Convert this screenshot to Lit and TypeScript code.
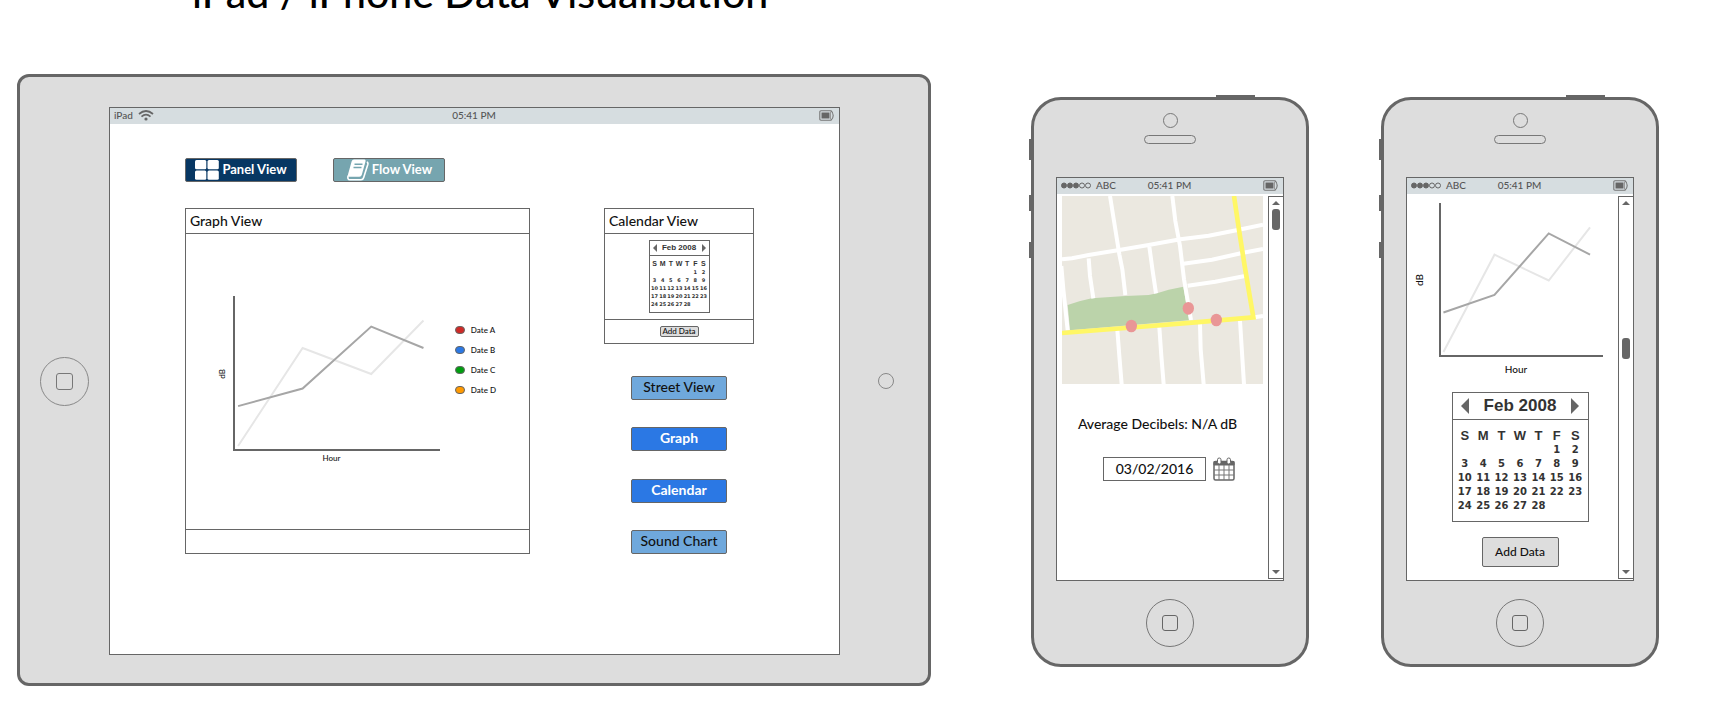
import { LitElement, html, svg, css } from "lit";
import { customElement, property } from "lit/decorators.js";
import { classMap } from "lit/directives/class-map.js";
import { styleMap } from "lit/directives/style-map.js";

const base = css`
  * {
    box-sizing: border-box;
  }
  button,
  input {
    font: inherit;
    color: inherit;
    margin: 0;
    padding: 0;
  }
  svg {
    display: block;
  }
`;

/** Two-series line chart with axis captions. */
@customElement("line-chart")
export class LineChart extends LitElement {
  @property({ type: Boolean, reflect: true }) small = false;

  static styles = [
    base,
    css`
      :host {
        display: grid;
        grid-template-columns: auto minmax(0, 1fr);
        align-content: start;
        column-gap: 14px;
        row-gap: 6px;
        font-size: 10px;
        font-weight: 500;
        line-height: 12px;
        color: #111;
      }
      :host([small]) {
        column-gap: 6px;
        row-gap: 2px;
        font-size: 8px;
        line-height: 10px;
      }
      .vertical {
        writing-mode: vertical-rl;
        transform: rotate(180deg);
        justify-self: center;
        align-self: center;
      }
      .plot {
        width: 100%;
        height: 154px;
        border-left: 2px solid #666;
        border-bottom: 2px solid #666;
      }
      :host([small]) .plot {
        height: 155px;
      }
      .plot path {
        fill: none;
        stroke-width: 2;
        vector-effect: non-scaling-stroke;
      }
      .pale {
        stroke: #e6e6e6;
      }
      .dark {
        stroke: #a6a6a6;
      }
      .horizontal {
        grid-column: 2;
        text-align: center;
        padding-right: 10px;
      }
    `,
  ];

  render() {
    return html`
      <span class="vertical">dB</span>
      <svg class="plot" viewBox="0 0 100 100" preserveAspectRatio="none" aria-hidden="true">
        <path class="pale" d="M1.500 98L33 34L66.500 51L92 16" />
        <path class="dark" d="M1.500 72L33 60.500L66.500 20L92 34" />
      </svg>
      <span class="horizontal">Hour</span>
    `;
  }
}

/** Month grid. */
@customElement("month-calendar")
export class MonthCalendar extends LitElement {
  @property({ type: Boolean, reflect: true }) small = false;

  static styles = [
    base,
    css`
      :host {
        display: block;
        width: 137px;
        border: 1px solid #666;
        color: #333;
        background: #fff;
      }
      .head {
        display: flex;
        align-items: center;
        justify-content: space-between;
        height: 27px;
        padding: 0 8px;
        border-bottom: 1px solid #666;
        font: bold 17px/26px "Liberation Sans", Arial, sans-serif;
      }
      .step {
        border: 0;
        background: none;
        color: #666;
      }
      .step svg {
        width: 8px;
        height: 16px;
      }
      .body {
        padding: 9px 3px 8px;
      }
      table {
        width: 100%;
        table-layout: fixed;
        border-collapse: collapse;
        font: bold 10px/14px "DejaVu Sans", Verdana, sans-serif;
      }
      th,
      td {
        padding: 0;
        height: 14px;
        text-align: center;
        white-space: nowrap;
      }
      th {
        font: bold 13px/14px "Liberation Sans", Arial, sans-serif;
      }
      :host([small]) {
        width: 61px;
      }
      :host([small]) .head {
        height: 15px;
        padding: 0 3px;
        font-size: 8px;
        line-height: 14px;
      }
      :host([small]) .step svg {
        width: 4px;
        height: 8px;
      }
      :host([small]) .body {
        padding: 4px 1px;
      }
      :host([small]) table {
        font-size: 5px;
        line-height: 8px;
      }
      :host([small]) th,
      :host([small]) td {
        height: 8px;
      }
      :host([small]) th {
        font-size: 7px;
        line-height: 8px;
      }
    `,
  ];

  render() {
    const days = ["S", "M", "T", "W", "T", "F", "S"];
    const offset = 5;
    const weeks = Array.from({ length: 5 }, (_, w) =>
      days.map((_d, i) => {
        const n = w * 7 + i - offset + 1;
        return n > 0 && n < 29 ? n : "";
      })
    );
    return html`
      <div class="head">
        <button class="step" aria-label="Previous month">
          <svg viewBox="0 0 8 16"><path fill="currentColor" d="M8 0V16L0 8Z" /></svg>
        </button>
        <span>Feb 2008</span>
        <button class="step" aria-label="Next month">
          <svg viewBox="0 0 8 16"><path fill="currentColor" d="M0 0V16L8 8Z" /></svg>
        </button>
      </div>
      <div class="body">
        <table>
          <thead>
            <tr>${days.map((d) => html`<th scope="col">${d}</th>`)}</tr>
          </thead>
          <tbody>
            ${weeks.map((w) => html`<tr>${w.map((n) => html`<td>${n}</td>`)}</tr>`)}
          </tbody>
        </table>
      </div>
    `;
  }
}

/** Carrier, clock and battery strip. */
@customElement("status-bar")
export class StatusBar extends LitElement {
  @property() device: "tablet" | "phone" = "phone";

  static styles = [
    base,
    css`
      :host {
        display: grid;
        grid-template-columns: 1fr auto 1fr;
        align-items: center;
        height: 16px;
        padding: 0 5px 2px 4px;
        background: #d6dde0;
        color: #555;
        font-size: 10px;
        font-weight: 500;
        line-height: 14px;
      }
      .carrier {
        display: flex;
        align-items: center;
        gap: 5px;
      }
      .battery {
        justify-self: end;
      }
    `,
  ];

  render() {
    const carrier =
      this.device === "tablet"
        ? html`<span>iPad</span>
            <svg width="16" height="11" viewBox="0 0 16 11" fill="none" stroke="#666" stroke-width="1.7">
              <path d="M1 4 Q8 -2 15 4" />
              <path d="M3.5 6.7 Q8 2.700 12.500 6.700" />
              <circle cx="8" cy="9" r="1.600" fill="#666" stroke="none" />
            </svg>`
        : html`<svg width="30" height="7" viewBox="0 0 30 7" stroke="#666" stroke-width="1">
              ${[0, 1, 2, 3, 4].map(
                (i) => svg`<circle cx=${3 + i * 6} cy="3.5" r="2.5" fill=${i < 3 ? "#666" : "none"} />`
              )}
            </svg>
            <span>ABC</span>`;
    return html`
      <span class="carrier">${carrier}</span>
      <span>05:41 PM</span>
      <svg class="battery" width="15" height="11" viewBox="0 0 15 11">
        <path
          d="M2 .8H12Q14.200 2.500 14.200 5.500Q14.200 8.500 12 10.200H2Q.8 10.200 .8 9V2Q.8 .8 2 .8Z"
          fill="none"
          stroke="#777"
          stroke-width="1.100"
        />
        <path d="M11.500 1.500V9.500" stroke="#999" stroke-width="1" />
        <rect x="2.500" y="2.500" width="8" height="6" fill="#666" />
      </svg>
    `;
  }
}

/** Handset frame; its content is slotted beside the scroll track. */
@customElement("phone-frame")
export class PhoneFrame extends LitElement {
  @property({ type: Number }) scroll = 0;

  static styles = [
    base,
    css`
      :host {
        display: block;
        position: relative;
        padding: 13px 22px 17px;
        border: 3px solid #666;
        border-radius: 30px;
        background: #ddd;
      }
      .key {
        position: absolute;
        right: 100%;
        width: 5px;
        height: 16px;
        background: #666;
      }
      .mute {
        top: 39px;
        height: 21px;
      }
      .up {
        top: 95px;
      }
      .down {
        top: 142px;
      }
      .power {
        right: 51px;
        bottom: 100%;
        width: 39px;
        height: 5px;
      }
      .top {
        display: flex;
        flex-direction: column;
        align-items: center;
        gap: 7px;
        padding-bottom: 33px;
      }
      .camera {
        width: 15px;
        height: 15px;
        border: 1px solid #777;
        border-radius: 50%;
      }
      .speaker {
        width: 52px;
        height: 9px;
        border: 1px solid #777;
        border-radius: 5px;
      }
      .screen {
        border: 1px solid #666;
        background: #fff;
      }
      .view {
        display: flex;
        min-height: 386px;
        padding-top: 2px;
      }
      .content {
        flex: 1;
        min-width: 0;
        padding: 0 5px;
      }
      .scrollbar {
        display: flex;
        flex-direction: column;
        align-items: center;
        width: 15px;
        margin-bottom: 1px;
        padding: 4px 0;
        border: solid #666;
        border-width: 1px 0 1px 1px;
      }
      .scrollbar svg {
        width: 8px;
        height: 4px;
      }
      .track {
        flex: 1;
        padding: 4px 0;
      }
      .thumb {
        width: 8px;
        height: 21px;
        border-radius: 3px;
        background: #666;
      }
      .home {
        display: grid;
        place-items: center;
        width: 48px;
        height: 48px;
        margin: 18px auto 0;
        padding: 0;
        border: 1px solid #777;
        border-radius: 50%;
        background: none;
      }
      .home span {
        width: 16px;
        height: 16px;
        border: 1px solid #666;
        border-radius: 3px;
      }
    `,
  ];

  render() {
    return html`
      <span class="key mute"></span><span class="key up"></span>
      <span class="key down"></span>
      <span class="key power"></span>
      <div class="top"><span class="camera"></span><span class="speaker"></span></div>
      <div class="screen">
        <status-bar></status-bar>
        <div class="view">
          <div class="content"><slot></slot></div>
          <div class="scrollbar">
            <svg viewBox="0 0 8 4"><path fill="#666" d="M4 0L8 4H0Z" /></svg>
            <div class="track">
              <div style=${styleMap({ height: `${this.scroll}%` })}></div>
              <div class="thumb"></div>
            </div>
            <svg viewBox="0 0 8 4"><path fill="#666" d="M0 0H8L4 4Z" /></svg>
          </div>
        </div>
      </div>
      <button class="home" aria-label="Home"><span></span></button>
    `;
  }
}

const streetMap = html`
  <svg class="map" viewBox="0 0 603 565" role="img" aria-label="Street map">
    <rect width="603" height="565" fill="#ebe8e0" />
    <path fill="#bbd3aa" d="M17 327L52 316L89 307L190 300L260 297L285 292L320 281L364 272L381 373L24 403Z" />
    <g fill="none" stroke="#fff" stroke-width="12">
      <path d="M0 190L30 187L80 177L172 162L260 147L355 130L440 119L527 102L603 86" />
      <path d="M144 0L156 75L172 175L181 220L190 297" />
      <path d="M331 0L340 75L354 150L366 250L387 372" />
      <path d="M80 187L84 240L94 307" />
      <path d="M262 152L272 225L282 292" />
      <path d="M364 203L450 191L540 171L603 159" />
      <path d="M377 269L460 257L549 240" />
      <path d="M-2 210L4 280L17 403" />
      <path d="M578 364L603 360" />
      <path d="M166 402L172 480L179 565M292 394L298 480L305 565" />
      <path d="M414 384L416 460L425 565M534 374L540 470L546 565" />
    </g>
    <path d="M0 411L190 396L400 379L574 364L548 210L530 95L516 0" fill="none" stroke="#fff766" stroke-width="14" />
    <g fill="#e99696">
      <ellipse cx="208" cy="390" rx="17" ry="19" />
      <ellipse cx="379" cy="337" rx="17" ry="19" />
      <ellipse cx="463" cy="372" rx="17" ry="19" />
    </g>
  </svg>
`;

const calendarIcon = html`
  <svg width="22" height="24" viewBox="0 0 22 24" fill="none" stroke="#666">
    <rect x="1" y="4.500" width="20" height="18.500" rx="1.500" stroke-width="1.500" fill="#fff" />
    <path d="M1 4.500H21V8H1Z" fill="#666" />
    <path d="M1 13H21M1 18H21M6 8V23M11 8V23M16 8V23" stroke="#777" />
    <rect x="4.500" y="1" width="3.500" height="6" rx="1.700" fill="#fff" />
    <rect x="14" y="1" width="3.500" height="6" rx="1.700" fill="#fff" />
  </svg>
`;

const panelIcon = html`
  <svg width="24" height="20" viewBox="0 0 24 20" fill="#fff">
    <rect x="0" y="0" width="11.300" height="9.300" rx="1.500" />
    <rect x="12.500" y="0" width="11.300" height="9.300" rx="1.500" />
    <rect x="0" y="10.500" width="11.300" height="9.300" rx="1.500" />
    <rect x="12.500" y="10.500" width="11.300" height="9.300" rx="1.500" />
  </svg>
`;

const bookIcon = html`
  <svg width="23" height="22" viewBox="0 0 23 22">
    <path
      d="M2.200 16.500Q1 20.800 4 20.800H15Q17 20.800 17.600 18.800L21.800 5.500Q22.300 3.500 20.800 3"
      fill="none"
      stroke="#fff"
      stroke-width="1.600"
    />
    <path d="M8 .5H18.500Q20 .5 19.500 2.500L15.800 15.800Q15.300 17.800 13.300 17.800H3.200Q1.500 17.800 2 15.500L5.600 2.500Q6.200 .5 8 .5Z" fill="#fff" />
    <path d="M8.500 5.200H16.500M7.500 8.500H15.500" stroke="#76a5af" stroke-width="1.400" />
  </svg>
`;

@customElement("app-root")
export class AppRoot extends LitElement {
  static styles = [
    base,
    css`
      :host {
        display: block;
        background: #fff;
        color: #111;
        font-family: Lato, "Open Sans", sans-serif;
        font-size: 14px;
        line-height: 20px;
      }
      header {
        display: flex;
        align-items: flex-end;
        height: 13px;
        padding-left: 192px;
        overflow: hidden;
      }
      h1 {
        margin: 0;
        font-size: 41px;
        font-weight: 500;
        line-height: 40px;
        color: #000;
        white-space: nowrap;
      }
      main {
        display: grid;
        grid-template-columns: minmax(0, 942fr) minmax(0, 278fr) minmax(0, 278fr);
        align-items: start;
        column-gap: 72px;
        padding: 61px 57px 17px 17px;
      }
      .stage {
        padding-right: 28px;
      }
      .tablet {
        display: grid;
        grid-template-columns: 89px minmax(0, 1fr) 88px;
        align-items: center;
        justify-items: center;
        padding: 30px 0 28px;
        border: 3px solid #666;
        border-radius: 12px;
        background: #ddd;
      }
      .home {
        display: grid;
        place-items: center;
        width: 49px;
        height: 49px;
        border: 1px solid #888;
        border-radius: 50%;
        background: none;
      }
      .home span {
        width: 17px;
        height: 17px;
        border: 1px solid #777;
        border-radius: 3px;
      }
      .lens {
        width: 16px;
        height: 16px;
        margin-left: 4px;
        border: 1px solid #888;
        border-radius: 50%;
      }
      .screen {
        justify-self: stretch;
        border: 1px solid #666;
        background: #fff;
      }
      .desk {
        padding: 34px 85px 100px 75px;
      }
      .modes {
        display: flex;
        gap: 36px;
        margin-bottom: 26px;
      }
      .btn {
        display: flex;
        align-items: center;
        justify-content: center;
        height: 24px;
        border: 1px solid #666;
        border-radius: 2px;
        padding-bottom: 2px;
        font-size: 14px;
        line-height: 20px;
        white-space: nowrap;
      }
      .mode {
        width: 112px;
        padding: 0;
        gap: 3px;
        color: #fff;
        font-size: 13px;
        font-weight: bold;
      }
      .mode span {
        padding-bottom: 2px;
      }
      .navy {
        background: #073763;
      }
      .teal {
        background: #76a5af;
      }
      .boards {
        display: grid;
        grid-template-columns: minmax(0, 345fr) minmax(0, 150fr);
        gap: 74px;
      }
      .panel {
        border: 1px solid #666;
      }
      h2 {
        margin: 0;
        height: 25px;
        padding: 0 4px;
        border-bottom: 1px solid #666;
        font-size: 14px;
        font-weight: 500;
        line-height: 24px;
      }
      .foot {
        display: grid;
        place-items: center;
        height: 24px;
        border-top: 1px solid #666;
      }
      .graph {
        display: flex;
        gap: 15px;
        height: 295px;
        padding: 62px 33px 0 31px;
      }
      .graph line-chart {
        flex: 1;
      }
      .legend {
        display: flex;
        flex-direction: column;
        gap: 10px;
        margin: 0;
        padding: 29px 0 0;
        list-style: none;
        font-size: 8px;
        font-weight: 500;
        line-height: 10px;
      }
      .legend li {
        display: flex;
        align-items: center;
        gap: 6px;
      }
      .swatch {
        width: 10px;
        height: 8px;
        border: 1px solid #666;
        border-radius: 4px;
      }
      .side {
        display: flex;
        flex-direction: column;
      }
      .month {
        display: grid;
        place-items: center;
        height: 85px;
      }
      .tiny {
        width: 39px;
        height: 11px;
        border: 1px solid #666;
        border-radius: 2px;
        background: #ddd;
        font-size: 8px;
        font-weight: 500;
        line-height: 9px;
        white-space: nowrap;
      }
      .links {
        display: flex;
        flex: 1;
        flex-direction: column;
        align-items: center;
        justify-content: space-between;
        padding-top: 32px;
      }
      .link {
        width: 96px;
        background: #6fa8dc;
        color: #111;
        font-weight: 500;
      }
      .link.active {
        background: #2b78e4;
        color: #fff;
        font-weight: bold;
      }
      phone-frame {
        margin-top: 23px;
      }
      .map {
        width: 100%;
      }
      .average {
        margin: 30px 0 23px;
        padding-right: 10px;
        font-weight: 500;
        text-align: center;
      }
      .when {
        display: flex;
        justify-content: flex-end;
        gap: 7px;
        padding-right: 28px;
      }
      .date {
        width: 103px;
        height: 24px;
        border: 1px solid #666;
        padding-bottom: 2px;
        background: #fff;
        font-weight: 500;
        text-align: center;
      }
      .icon {
        border: 0;
        background: none;
      }
      .trend {
        padding: 7px 10px 0 1px;
      }
      .picker {
        display: flex;
        flex-direction: column;
        align-items: center;
        gap: 15px;
        padding: 17px 0 0 15px;
      }
      .add {
        width: 77px;
        height: 30px;
        padding-bottom: 0;
        background: #ddd;
        font-size: 12px;
        font-weight: 500;
      }
    `,
  ];

  render() {
    const legend = [
      ["Date A", "#cf2a27"],
      ["Date B", "#2b78e4"],
      ["Date C", "#009e0f"],
      ["Date D", "#ff9900"],
    ];
    const links: [string, boolean][] = [
      ["Street View", false],
      ["Graph", true],
      ["Calendar", true],
      ["Sound Chart", false],
    ];
    return html`
      <header><h1>iPad / iPhone Data Visualisation</h1></header>
      <main>
        <div class="stage">
          <section class="tablet" aria-label="iPad">
            <button class="home" aria-label="Home"><span></span></button>
            <div class="screen">
              <status-bar device="tablet"></status-bar>
              <div class="desk">
                <div class="modes">
                  <button class="btn mode navy">${panelIcon}<span>Panel View</span></button>
                  <button class="btn mode teal">${bookIcon}<span>Flow View</span></button>
                </div>
                <div class="boards">
                  <section class="panel">
                    <h2>Graph View</h2>
                    <div class="graph">
                      <line-chart small></line-chart>
                      <ul class="legend">
                        ${legend.map(
                          ([name, color]) => html`<li>
                            <span class="swatch" style=${styleMap({ background: color })}></span>${name}
                          </li>`
                        )}
                      </ul>
                    </div>
                    <div class="foot"></div>
                  </section>
                  <div class="side">
                    <section class="panel">
                      <h2>Calendar View</h2>
                      <div class="month"><month-calendar small></month-calendar></div>
                      <div class="foot"><button class="tiny">Add Data</button></div>
                    </section>
                    <nav class="links" aria-label="Views">
                      ${links.map(
                        ([name, active]) =>
                          html`<button class=${classMap({ btn: true, link: true, active })}>${name}</button>`
                      )}
                    </nav>
                  </div>
                </div>
              </div>
            </div>
            <span class="lens"></span>
          </section>
        </div>
        <phone-frame .scroll=${0}>
          ${streetMap}
          <p class="average">Average Decibels: N/A dB</p>
          <div class="when">
            <input class="date" type="text" aria-label="Date" value="03/02/2016" />
            <button class="icon" aria-label="Pick a date">${calendarIcon}</button>
          </div>
        </phone-frame>
        <phone-frame .scroll=${36}>
          <div class="trend"><line-chart></line-chart></div>
          <div class="picker">
            <month-calendar></month-calendar>
            <button class="btn add">Add Data</button>
          </div>
        </phone-frame>
      </main>
    `;
  }
}
